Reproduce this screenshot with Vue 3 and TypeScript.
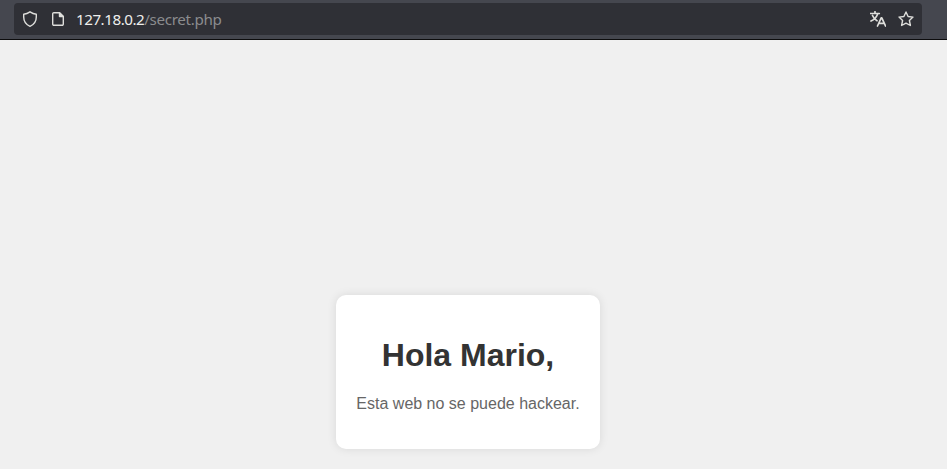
<script setup lang="ts">
const host: string = '127.18.0.2'
const path: string = '/secret.php'
</script>

<template>
  <div class="window">
    <header class="toolbar">
      <div class="urlbar">
        <svg class="icon" viewBox="0 0 16 16"><path d="M8 .8Q11 2.800 14.300 3.200V6c0 4.300-2.300 7.500-6.300 9.300C4 13.500 1.700 10.300 1.700 6V3.200Q5 2.800 8 .8z" /></svg>
        <svg class="icon page-icon" viewBox="0 0 16 16"><path d="M9.500 1.700H4A1.200 1.200 0 0 0 2.700 3v10A1.200 1.200 0 0 0 4 14.300h8a1.200 1.200 0 0 0 1.300-1.300V5.500L9.500 1.700" /><path class="fold" d="M9.500 1.700v3.800h3.800z" /></svg>
        <div class="address"><span class="host">{{ host }}</span><span class="path">{{ path }}</span></div>
        <svg class="icon translate" viewBox="0 0 16 16"><path d="M.5 2.500h8.800M5 .7v1.800M7.700 3C6.500 6 4.500 8.500 1 10M2.500 4.500c1 2.500 2.500 4 4.500 5.200M7.500 15 11.200 6.800h.6l3.700 8.200M9 12.300h5" /></svg>
        <svg class="icon star" viewBox="0 0 16 16"><path d="m8 1 2.100 4.500 4.900.6-3.600 3.400 1 5L8 12.100l-4.400 2.400 1-5L1 6.100l4.900-.6z" /></svg>
      </div>
    </header>
    <main class="content">
      <section class="card">
        <h1>Hola Mario,</h1>
        <p>Esta web no se puede hackear.</p>
      </section>
    </main>
  </div>
</template>

<style>
body { margin: 0; }
</style>
<style scoped>
.window { height: 469px; display: flex; flex-direction: column; overflow: hidden; background: #f0f0f0; }
.toolbar { box-sizing: border-box; height: 40px; flex: none; padding: 3px 25px 4px 14px; background: #45474f; border-bottom: 1px solid #0c0c0d; }
.urlbar { box-sizing: border-box; height: 32px; display: flex; align-items: center; padding: 0 8px; background: #2f3036; border-radius: 4px; }
.icon { width: 16px; height: 16px; flex: none; fill: none; stroke: #dededb; stroke-width: 1.400; stroke-linejoin: round; stroke-linecap: round; }
.translate { stroke-width: 1.700; }
.fold { fill: #dededb; }
.page-icon { margin-left: 12px; }
.star { margin-left: 12px; }
.address { flex: 1; display: flex; margin-left: 10px; color: #8b8c8e; font: 15.200px/20px "Noto Sans", sans-serif; }
.host { color: #eeeeec; letter-spacing: -.48px; }
.path { letter-spacing: -.34px; }
.content { flex: 1; display: flex; justify-content: center; align-items: flex-start; padding: 255px 11px 0 0; font-family: "Liberation Sans", Arial, sans-serif; }
.card { box-sizing: border-box; width: 264px; height: 154px; padding: 20px; background: #fff; border-radius: 10px; box-shadow: 0 0 10px rgba(0, 0, 0, .1); text-align: center; white-space: nowrap; }
h1 { margin: 21.500px 0; color: #333; font-size: 32px; line-height: 37px; }
p { margin: 0; color: #666; font-size: 16px; line-height: 18px; }
</style>
